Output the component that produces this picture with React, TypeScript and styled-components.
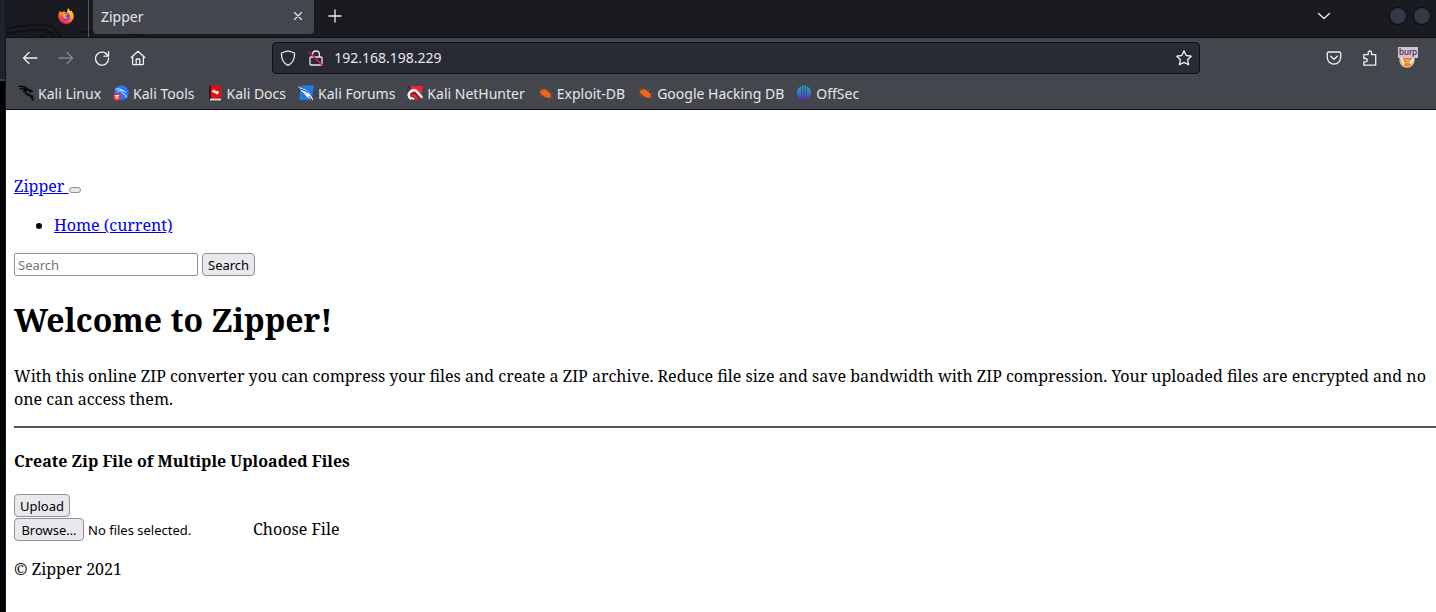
import React from "react";
import styled, { createGlobalStyle } from "styled-components";

const GlobalStyle = createGlobalStyle`
  * { box-sizing: border-box; }
  html, body, #root { min-height: 100vh; margin: 0; }
  body { background: #000; }
`;

const serif = `"Noto Serif", "Droid Serif", "Liberation Serif", serif`;
const sans = `"Noto Sans", "Open Sans", sans-serif`;

const Desktop = styled.div`
  min-height: 100vh;
  padding-left: 5px;
  background: linear-gradient(#1f212c 0 79px, #3a3f55 79px 81px, #020202 81px);
`;

const Browser = styled.div`
  display: flex;
  flex-direction: column;
  min-height: 100vh;
  border-left: 1px solid #15161c;
  background: #fff;
  font-family: ${sans};
  overflow: hidden;
`;

const TabBar = styled.header`
  position: relative;
  display: flex;
  height: 38px;
  background: #1a1b20;
  border-bottom: 1px solid #0f1014;
  color: #e4e4e6;
`;

const Wallpaper = styled.svg`
  position: absolute;
  left: 0;
  top: 0;
`;

const PinnedArea = styled.div`
  position: relative;
  display: flex;
  justify-content: flex-end;
  width: 83px;
  padding: 8px 14px 0 0;
  border-right: 1px solid #55575c;
`;

const Tab = styled.div`
  position: relative;
  display: flex;
  align-items: center;
  justify-content: space-between;
  width: 221px;
  height: 34px;
  margin-left: 4px;
  padding: 0 8px 2px;
  border-radius: 0 0 4px 4px;
  background: #44464d;
  font-size: 14px;
`;

const IconButton = styled.button<{ $size?: number }>`
  display: flex;
  align-items: center;
  justify-content: center;
  flex: none;
  width: ${(p) => p.$size ?? 36}px;
  height: ${(p) => p.$size ?? 32}px;
  padding: 0;
  border: 0;
  background: none;
  color: #f0f0f1;
  &:disabled { color: #85878c; }
`;

const TabActions = styled.div`
  display: flex;
  flex: 1;
  align-items: center;
  justify-content: space-between;
  padding: 0 5px 6px 3px;
`;

const WindowControls = styled.div`
  display: flex;
  align-items: center;
`;

const RoundControl = styled.button`
  width: 18px;
  height: 18px;
  margin-left: 6px;
  padding: 0;
  border: 1px solid #08090b;
  border-radius: 50%;
  background: #343945;
`;

const ControlGap = styled.span`
  width: 41px;
`;

const Toolbar = styled.nav`
  display: flex;
  align-items: center;
  height: 41px;
  padding: 0 18px 2px 6px;
  background: #44464d;
`;

const Spacer = styled.span`
  flex: 118;
`;

const AddressBar = styled.div`
  display: flex;
  flex: 925;
  align-items: center;
  height: 32px;
  padding: 0 7px;
  gap: 12px;
  border: 1px solid #0e0f13;
  border-radius: 4px;
  background: #282a36;
  color: #e8e8e9;
`;

const AddressInput = styled.input`
  flex: 1;
  min-width: 0;
  margin-left: -2px;
  padding: 0;
  border: 0;
  outline: 0;
  background: none;
  color: inherit;
  font: 14px ${sans};
`;

const Bookmarks = styled.nav`
  display: flex;
  align-items: center;
  height: 31px;
  padding: 0 12px 2px;
  gap: 12px;
  background: #44464d;
  border-bottom: 1px solid #0d0d10;
`;

const Bookmark = styled.a`
  display: flex;
  align-items: center;
  gap: 4px;
  color: #e6e6e8;
  font-size: 14px;
  text-decoration: none;
  white-space: nowrap;
`;

const BurpButton = styled.button`
  position: relative;
  width: 20px;
  height: 22px;
  margin-left: 10px;
  padding: 0;
  border: 0;
  background: none;
`;

const BurpBadge = styled.span`
  position: absolute;
  left: 0;
  top: 0;
  width: 20px;
  height: 11px;
  padding-left: 1px;
  background: #d8bfd8;
  color: #1b1b1b;
  font: 9px/11px Roboto, sans-serif;
  text-align: left;
`;

const Page = styled.main`
  flex: 1;
  padding: 65px 0 32px 8px;
  color: #000;
  font-family: ${serif};
  font-size: 16px;
  line-height: 23px;
`;

const PageLink = styled.a`
  color: #0000ee;
  text-decoration: underline;
  white-space: pre;
`;

const Toggler = styled.button`
  width: 12px;
  height: 6px;
  padding: 0;
  border: 1px solid #8f8f9d;
  border-radius: 3px;
  background: #e9e9ed;
`;

const NavList = styled.ul`
  margin: 16px 0;
  padding-left: 40px;
`;

const SearchForm = styled.form`
  display: flex;
  gap: 4px;
`;

const SearchInput = styled.input`
  width: 184px;
  height: 23px;
  padding: 0 3px;
  border: 1px solid #8f8f9d;
  border-radius: 2px;
  font: 13px ${sans};
  &::placeholder { color: #757575; }
`;

const buttonLook = `
  height: 23px;
  padding: 0 5px;
  border: 1px solid #8f8f9d;
  border-radius: 4px;
  background: #e9e9ed;
  color: #000;
`;

const Button = styled.button`
  ${buttonLook}
  font: 13px ${sans};
`;

const Title = styled.h1`
  margin: 21px 0 22px;
  font-size: 32px;
  line-height: 46px;
`;

const Lead = styled.p`
  margin: 0 0 15px;
`;

const Rule = styled.hr`
  height: 2px;
  margin: 0;
  border: 0;
  background: #555;
`;

const Subtitle = styled.h4`
  margin: 22px 0 21px;
  font-size: 16px;
`;

const UploadForm = styled.form`
  display: flex;
  flex-direction: column;
  align-items: flex-start;
  gap: 1px;
`;

const FileRow = styled.div`
  display: flex;
  align-items: center;
`;

const HiddenFile = styled.input`
  position: absolute;
  width: 1px;
  height: 1px;
  opacity: 0;
`;

const FilePicker = styled.label`
  display: flex;
  align-items: center;
  gap: 4px;
  width: 239px;
  font: 13px ${sans};
`;

const BrowseFace = styled.span`
  ${buttonLook}
  min-width: 70px;
  line-height: 22px;
  text-align: center;
`;

const Footer = styled.footer`
  margin-top: 17px;
`;

const stroke = {
  fill: "none",
  stroke: "currentColor",
  strokeWidth: 1.3,
  strokeLinecap: "round" as const,
  strokeLinejoin: "round" as const,
};

const Glyph = ({ d, size = 16 }: { d: string; size?: number }) => (
  <svg width={size} height={size} viewBox="0 0 16 16" {...stroke} aria-hidden>
    <path d={d} />
  </svg>
);

const Firefox = () => (
  <svg width="16" height="16" viewBox="0 0 16 16" aria-hidden>
    <defs>
      <linearGradient id="flame" x1="0.8" y1="0" x2="0.2" y2="1">
        <stop offset="0" stopColor="#ffe226" />
        <stop offset="0.45" stopColor="#ff9a1f" />
        <stop offset="0.75" stopColor="#ff4040" />
        <stop offset="1" stopColor="#e31587" />
      </linearGradient>
    </defs>
    <path d="M1.9 3.1 3.6 4.2 5 3.9 6.3 2.5 6.5 4.2 9.4 4.6C8.8 2.9 9.2 1.3 10.4 0c.3 1.7 1.2 2.2 2.1 3.2l.6-.7c1.6 1.7 2.7 3.7 2.7 6A7.8 7.8 0 0 1 8 16 7.8 7.8 0 0 1 .2 8.6C.1 6.5.8 4.6 1.9 3.1Z" fill="url(#flame)" />
    <circle cx="8.2" cy="8.8" r="3.7" fill="#7542e5" />
    <path d="M4.2 5.6c1.6-.8 2.8-.4 3.6.5l1.8.2c0 .9-1.5 1.1-2 1.8 0 1.3 1.3 2 2.8 1.5-1.1 1.6-3.2 1.8-4.6.4C4.7 9 4.2 7.2 4.2 5.6Z" fill="#ffa321" />
  </svg>
);

const KaliDragon = () => (
  <svg width="16" height="16" viewBox="0 0 16 16" fill="none" stroke="#08090a" strokeWidth="1.4" strokeLinejoin="round" aria-hidden>
    <path d="M.4 1.4C4 .9 7.400 1.800 9.600 4.200M1.400 4.200c3-.9 5.200-.5 7.800.2" />
    <path d="M4.800 6.700c1.600-1.400 3.400-2 5.400-2.200l4.200 1.800-3.600.4" />
    <path d="M9.400 4.600C6.600 5.600 6.800 8.400 9.200 9.300c2.400.9 5 1.500 5.600 6" strokeWidth="2" />
    <path d="M13.500 10.600l1.700 1.200" />
  </svg>
);

const KaliTools = () => (
  <svg width="16" height="16" viewBox="0 0 16 16" fill="none" aria-hidden>
    <circle cx="8.5" cy="7.7" r="7.2" fill="#2777ff" />
    <path d="M2.5 4.3c3-.9 5.6-.6 7.3 1.4M4 6.6c2-1.2 3.9-1.2 5.8-.9l3 1.3M9.8 5.7C8 7.2 9 8.5 10.8 9c1.800.5 2.400 1.800 2.600 3.600" stroke="#e4f0ff" strokeWidth="1" />
    <circle cx="4" cy="12" r="3.800" fill="#e22b35" />
    <path d="M1.800 10.700h4.400M3.100 11v3M4.900 11v3" stroke="#fff" />
  </svg>
);

const KaliDocs = () => (
  <svg width="16" height="16" viewBox="0 0 16 16" fill="none" aria-hidden>
    <path d="M2 1h2v14H2z" fill="#3d1318" />
    <path d="M4 .6h10v12.800H4z" fill="#e10d16" />
    <path d="M3 13.600h11v1.800H3z" fill="#f4dddd" />
    <path d="M7.200 4.600 5.400 6.600l5.800 2M7.200 5.800l4.200 1.400-2 2" stroke="#fff" strokeWidth="1.200" />
  </svg>
);

const KaliForums = () => (
  <svg width="16" height="16" viewBox="0 0 16 16" aria-hidden>
    <path d="M3 .6h13l-2.300 14.200H1z" fill="#1d7bf2" />
    <path d="M0 1.500 2.500 4l.7 2L6 8.200l2.800 3.500 5.600 3.800.8-1.400L11 8 7 4.300 3.600 3.200 1 .8Z" fill="#f5f7f8" />
    <path d="m2.800 4.200 4.700 1.700 2 2.100m1.400 3.200 3.300 4M.4.700l1.800 1.700" stroke="#25292e" strokeWidth="1" fill="none" />
  </svg>
);

const NetHunter = () => (
  <svg width="16" height="16" viewBox="0 0 16 16" aria-hidden>
    <path d="M3.600 1H16l-2.800 14L8 14 2.200 8Z" fill="#ef2432" />
    <path d="M.3 1 3.500 3l-.8 1.100M0 5l2 1.200" stroke="#17191c" fill="none" />
    <path d="M4.300 14.200C1.200 12.800.8 8.300 3.500 6.400 6 4.600 8.500 5 10.300 7.100l5 5.700" stroke="#f3f3f3" strokeWidth="2.500" fill="none" />
    <path d="M5 9.500c1-2 3-1.900 4.200-.4l3.800 5.400" stroke="#80151b" strokeWidth="1.400" fill="none" />
    <path d="m3 12.500 4.300 1.600" stroke="#f3f3f3" strokeWidth="1.800" />
  </svg>
);

const Bug = () => (
  <svg width="16" height="16" viewBox="0 0 16 16" aria-hidden>
    <path d="m5 5-2.500-1.200M7.500 4 6 2M2 7.200l3 .6M5 10.500l-3.200.6M8 12l-2.600 1M11 6l1.800-1.200M13 8.500h2.600M11.500 12.500l1 1.500M13.500 12l2.200 1" stroke="#a9501f" strokeWidth="0.8" />
    <path d="M3.200 6 5.600 4.400l2.800.2 3 2.200 2.200 2.600.2 2.600-1.400.8-3.200-.4-3.200-2-2.600-2.200Z" fill="#f36513" />
  </svg>
);

const OffSec = () => (
  <svg width="16" height="16" viewBox="0 0 16 16" aria-hidden>
    <defs>
      <linearGradient id="offsec" gradientUnits="userSpaceOnUse" x1="0" y1="0" x2="0" y2="16">
        <stop stopColor="#13b5d4" />
        <stop offset="0.55" stopColor="#3f68cf" />
        <stop offset="1" stopColor="#6d18ce" />
      </linearGradient>
    </defs>
    <path d="M5.200 1.200v13.200A7.300 7.300 0 0 1 5.200 1.200ZM10.800 1.200v13.200A7.300 7.300 0 0 0 10.800 1.200ZM6 .6h1.500v15.200L6 14.800ZM8.500.6H10v14.200l-1.500 1Z" fill="url(#offsec)" />
  </svg>
);

const bookmarks: [string, React.FC][] = [
  ["Kali Linux", KaliDragon],
  ["Kali Tools", KaliTools],
  ["Kali Docs", KaliDocs],
  ["Kali Forums", KaliForums],
  ["Kali NetHunter", NetHunter],
  ["Exploit-DB", Bug],
  ["Google Hacking DB", Bug],
  ["OffSec", OffSec],
];

const BrowserChrome = () => (
  <>
    <TabBar>
      <Wallpaper width="160" height="37" fill="none" stroke="#101115" aria-hidden>
        <path d="M0 29C16 25 31 24 46 26l9 11M0 34c16-4 30-5 42-4M34 37l10-5 5 5M74 32c28-2 48 0 66 5" strokeWidth="2" />
      </Wallpaper>
      <PinnedArea><Firefox /></PinnedArea>
      <Tab>
        Zipper
        <IconButton $size={16} aria-label="Close tab"><Glyph size={14} d="m4 4 8 8m0-8-8 8" /></IconButton>
      </Tab>
      <TabActions>
        <IconButton aria-label="New tab"><Glyph d="M8 2v12M2 8h12" /></IconButton>
        <WindowControls>
          <IconButton aria-label="List all tabs"><Glyph d="m2.500 5.500 5.500 5 5.500-5" /></IconButton>
          <ControlGap />
          <RoundControl aria-label="Minimize" />
          <RoundControl aria-label="Maximize" />
        </WindowControls>
      </TabActions>
    </TabBar>
    <Toolbar>
      <IconButton aria-label="Back"><Glyph d="M15 8H1.500M7 2.500 1.500 8 7 13.500" /></IconButton>
      <IconButton aria-label="Forward" disabled><Glyph d="M1 8h13.500M9 2.500 14.500 8 9 13.500" /></IconButton>
      <IconButton aria-label="Reload"><Glyph d="M13.900 5.800A6.500 6.500 0 1 0 14.500 8M14.600 1.600v4.600H10M14.400 6 11 2.800" /></IconButton>
      <IconButton aria-label="Home"><Glyph d="M1.200 7.600 8 1.300l6.800 6.300M2.600 6.800v7c0 .6.3.9.9.9h9c.6 0 .9-.3.9-.9v-7M6.200 14.500V9.800c0-.5.3-.8.8-.8h2c.5 0 .8.3.8.8v4.700" /></IconButton>
      <Spacer />
      <AddressBar>
        <Glyph d="M8 .9 14.500 3c.3 5.500-1.300 9.800-6.500 12.300C2.800 12.800 1.200 8.500 1.500 3Z" />
        <svg width="16" height="16" viewBox="0 0 16 16" {...stroke} aria-hidden>
          <path d="M4.600 7V4.400a3.400 3.400 0 0 1 6.800 0V7M3 7h10c.6 0 1 .4 1 1v6c0 .6-.4 1-1 1H3c-.6 0-1-.4-1-1V8c0-.6.4-1 1-1Z" />
          <path d="m1.500 2.500 12.800 12.800" stroke="#e5194b" strokeWidth="1.500" />
        </svg>
        <AddressInput aria-label="Address" defaultValue="192.168.198.229" />
        <IconButton $size={16} aria-label="Bookmark this page"><Glyph d="m8 .9 2.200 4.600 5 .7-3.600 3.500.9 5.100L8 12.400l-4.500 2.400.9-5.100L.8 6.200l5-.7Z" /></IconButton>
      </AddressBar>
      <Spacer />
      <IconButton aria-label="Save to Pocket"><Glyph d="M2.500 2h11c.7 0 1.200.5 1.200 1.200v4.300A6.700 6.700 0 0 1 1.300 7.500V3.200C1.300 2.500 1.800 2 2.500 2ZM4.700 6.200 8 9.300l3.300-3.100" /></IconButton>
      <IconButton aria-label="Extensions"><Glyph d="M1.800 5.800V4.600h4.400V2.700a1.700 1.700 0 0 1 3.400 0v1.900h4.100v10.600H1.800v-3.300h1.800a1.700 1.700 0 0 0 0-3.400H1.800V5.800" /></IconButton>
      <BurpButton aria-label="Proxy settings">
        <svg width="20" height="22" viewBox="0 0 20 22" aria-hidden>
          <circle cx="9" cy="13" r="7" fill="#ec8620" stroke="#e5c39a" strokeWidth="1.400" />
          <path d="m2 10 3 8 2-1-3-7ZM15.500 10 11 16l2 1.500 3-5Z" fill="#f1eeee" />
          <path d="m7 13 5 1m-4 2 3-1" stroke="#f9c06e" />
        </svg>
        <BurpBadge>burp</BurpBadge>
      </BurpButton>
    </Toolbar>
    <Bookmarks aria-label="Bookmarks">
      {bookmarks.map(([name, Icon]) => (
        <Bookmark key={name} href="#"><Icon />{name}</Bookmark>
      ))}
    </Bookmarks>
  </>
);

export default function App() {
  const stop = (e: React.FormEvent) => e.preventDefault();
  return (
    <>
      <GlobalStyle />
      <Desktop>
        <Browser>
          <BrowserChrome />
          <Page>
            <div>
              <PageLink href="#">{"Zipper "}</PageLink>
              <Toggler type="button" aria-label="Toggle navigation" />
            </div>
            <NavList>
              <li><PageLink href="#">Home (current)</PageLink></li>
            </NavList>
            <SearchForm onSubmit={stop}>
              <SearchInput type="search" placeholder="Search" aria-label="Search" />
              <Button type="submit">Search</Button>
            </SearchForm>
            <Title>Welcome to Zipper!</Title>
            <Lead>
              With this online ZIP converter you can compress your files and create a ZIP archive. Reduce file size and save
              bandwidth with ZIP compression. Your uploaded files are encrypted and no one can access them.
            </Lead>
            <Rule />
            <Subtitle>Create Zip File of Multiple Uploaded Files</Subtitle>
            <UploadForm onSubmit={stop}>
              <Button type="submit">Upload</Button>
              <FileRow>
                <HiddenFile id="files" type="file" multiple />
                <FilePicker htmlFor="files">
                  <BrowseFace>Browse…</BrowseFace>
                  No files selected.
                </FilePicker>
                <label htmlFor="files">Choose File</label>
              </FileRow>
            </UploadForm>
            <Footer>© Zipper 2021</Footer>
          </Page>
        </Browser>
      </Desktop>
    </>
  );
}
